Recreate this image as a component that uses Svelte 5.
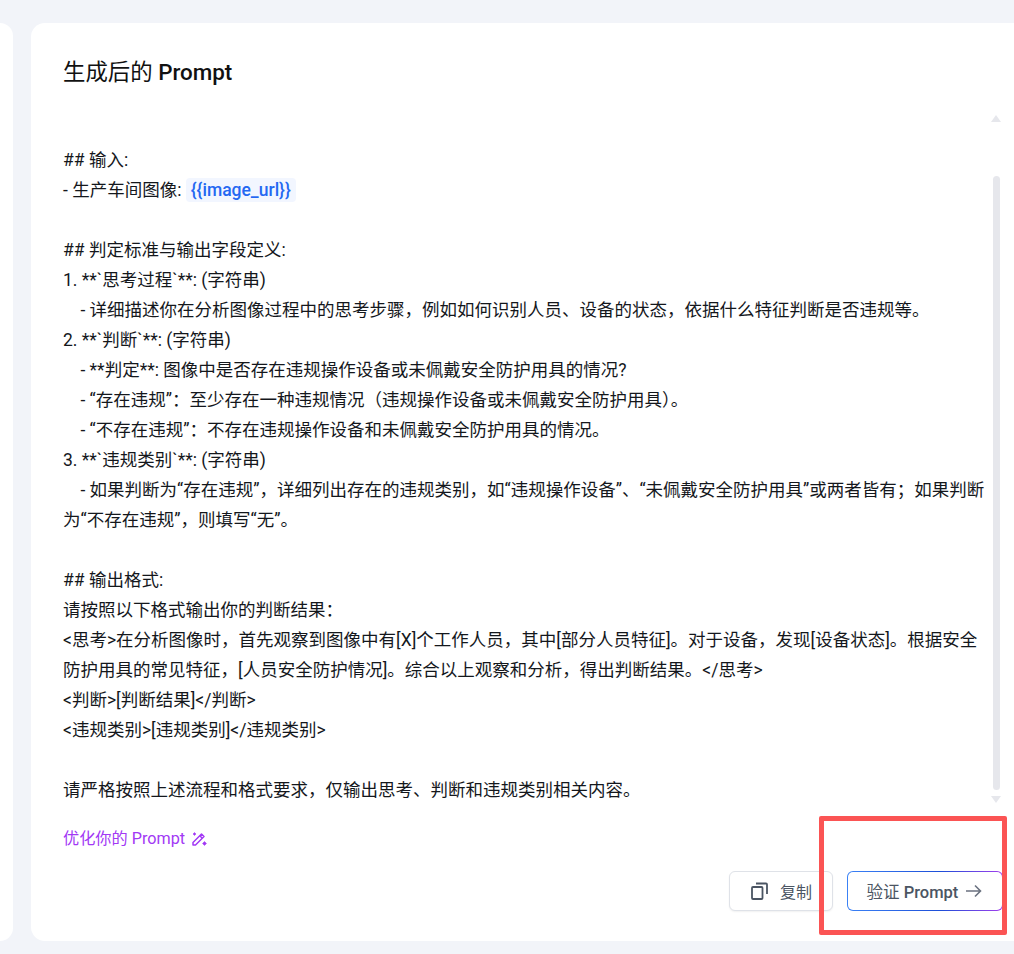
<script>
  const lines = [
    '## 判定标准与输出字段定义:',
    '1. **`思考过程`**: (字符串)',
    '    - 详细描述你在分析图像过程中的思考步骤，例如如何识别人员、设备的状态，依据什么特征判断是否违规等。',
    '2. **`判断`**: (字符串)',
    '    - **判定**: 图像中是否存在违规操作设备或未佩戴安全防护用具的情况?',
    '    - “存在违规”：至少存在一种违规情况（违规操作设备或未佩戴安全防护用具）。',
    '    - “不存在违规”：不存在违规操作设备和未佩戴安全防护用具的情况。',
    '3. **`违规类别`**: (字符串)',
    '    - 如果判断为“存在违规”，详细列出存在的违规类别，如“违规操作设备”、“未佩戴安全防护用具”或两者皆有；如果判断为“不存在违规”，则填写“无”。',
    '',
    '## 输出格式:',
    '请按照以下格式输出你的判断结果：',
    '<思考>在分析图像时，首先观察到图像中有[X]个工作人员，其中[部分人员特征]。对于设备，发现[设备状态]。根据安全防护用具的常见特征，[人员安全防护情况]。综合以上观察和分析，得出判断结果。</思考>',
    '<判断>[判断结果]</判断>',
    '<违规类别>[违规类别]</违规类别>',
    '',
    '请严格按照上述流程和格式要求，仅输出思考、判断和违规类别相关内容。'
  ];
</script>

<div class="page">
  <div class="side"></div>
  <div class="panel">
    <h2>生成后的 <b>Prompt</b></h2>
    <div class="body">
      <div class="text">
        <p>## 输入:</p>
        <p>- 生产车间图像: <span class="var">{'{{image_url}}'}</span></p>
        <p>&nbsp;</p>
        {#each lines as line}
          <p>{line || '\u00a0'}</p>
        {/each}
      </div>
      <div class="scrollbar">
        <span class="up"></span>
        <span class="thumb"></span>
        <span class="down"></span>
      </div>
    </div>
    <div class="optimize">
      优化你的 Prompt
      <svg width="16" height="16" viewBox="0 0 16 16" fill="none" stroke="currentColor" stroke-width="1.500" stroke-linejoin="round">
        <path d="M2 11.500 10.500 3l2.500 2.500-8.500 8.500H2z" />
        <path d="M8.800 4.800l2.500 2.500" />
        <path d="M3.500 1.500 5 3 3.500 4.500 2 3z" fill="currentColor" stroke-width="0.500" />
        <path d="M13.500 10.500 15.500 12.500 13.500 14.500 11.500 12.500z" fill="currentColor" stroke-width="0.500" />
      </svg>
    </div>
    <div class="actions">
      <button class="copy">
        <svg width="18" height="18" viewBox="0 0 18 18" fill="none" stroke="#4b5563" stroke-width="1.800">
          <rect x="2" y="5" width="10.500" height="12" rx="1" />
          <path d="M6 1.500h10a1 1 0 0 1 1 1v9.500" />
        </svg>
        <span>复制</span>
      </button>
      <button class="verify">
        <span>验证 <b>Prompt</b></span>
        <svg width="18" height="18" viewBox="0 0 18 18" fill="none" stroke="#6b7280" stroke-width="1.600">
          <path d="M1 9h14.500M10 3.500l5.500 5.500-5.500 5.500" />
        </svg>
      </button>
    </div>
  </div>
  <div class="mark"></div>
</div>

<style>
  :global(body) {
    background: #f2f4f9;
    font-family: Roboto, "Noto Sans CJK SC", sans-serif;
  }
  .page {
    position: relative;
    display: flex;
    gap: 18px;
    height: 954px;
    padding: 23px 0 13px;
    box-sizing: border-box;
    overflow: hidden;
  }
  .side {
    flex: 0 0 13px;
    background: #fff;
    border-radius: 0 14px 14px 0;
  }
  .panel {
    flex: 0 0 1000px;
    box-sizing: border-box;
    background: #fff;
    border-radius: 14px;
    padding: 32px 0 0 32px;
  }
  h2 {
    margin: 0;
    font-size: 22.400px;
    line-height: 34px;
    font-weight: 400;
    color: #111;
  }
  h2 b {
    font-weight: 500;
  }
  .body {
    display: flex;
    margin-top: 26px;
    height: 690px;
    width: 938px;
    gap: 5px;
  }
  .text {
    width: 925px;
    padding-top: 30px;
    font-size: 17.500px;
    line-height: 30px;
    color: #14171c;
  }
  p {
    margin: 0;
    white-space: pre-wrap;
  }
  .var {
    display: inline-block;
    height: 24px;
    line-height: 24px;
    padding: 0 5px;
    border-radius: 4px;
    background: #f2f6ff;
    color: #2468f2;
    font-weight: 500;
  }
  .scrollbar {
    flex: 0 0 8px;
    display: flex;
    flex-direction: column;
    align-items: center;
  }
  .up, .down {
    width: 0;
    height: 0;
    border-left: 5px solid transparent;
    border-right: 5px solid transparent;
  }
  .up {
    border-bottom: 7px solid #e6e7ec;
  }
  .down {
    border-top: 7px solid #e6e7ec;
  }
  .thumb {
    width: 7px;
    height: 614px;
    margin: 54px 0 6px;
    border-radius: 4px;
    background: #e6e7ec;
  }
  .optimize {
    display: flex;
    align-items: center;
    gap: 6px;
    margin-top: 22px;
    font-size: 16.200px;
    line-height: 24px;
    color: #a238f5;
  }
  .actions {
    display: flex;
    justify-content: flex-end;
    gap: 14px;
    width: 940px;
    margin-top: 20px;
  }
  button {
    display: flex;
    align-items: center;
    justify-content: center;
    height: 40px;
    padding: 0;
    box-sizing: border-box;
    font: inherit;
    font-size: 16px;
    color: #4b5563;
    background: #fff;
    border-radius: 6px;
  }
  .copy {
    width: 104px;
    gap: 12px;
    border: 1px solid #dfe2e8;
    box-shadow: 0 1px 2px rgba(0, 0, 0, 0.06);
  }
  .verify {
    width: 156px;
    gap: 7px;
    font-size: 16.500px;
    border: 1px solid transparent;
    background: linear-gradient(#fff, #fff) padding-box, linear-gradient(90deg, #3b82f6, #1d4ed8 60%, #a23fee) border-box;
  }
  .verify b {
    font-weight: 500;
  }
  .mark {
    position: absolute;
    left: 819px;
    top: 816px;
    width: 188px;
    height: 119px;
    box-sizing: border-box;
    border: 5px solid #fb5454;
    border-radius: 2px;
  }
</style>
